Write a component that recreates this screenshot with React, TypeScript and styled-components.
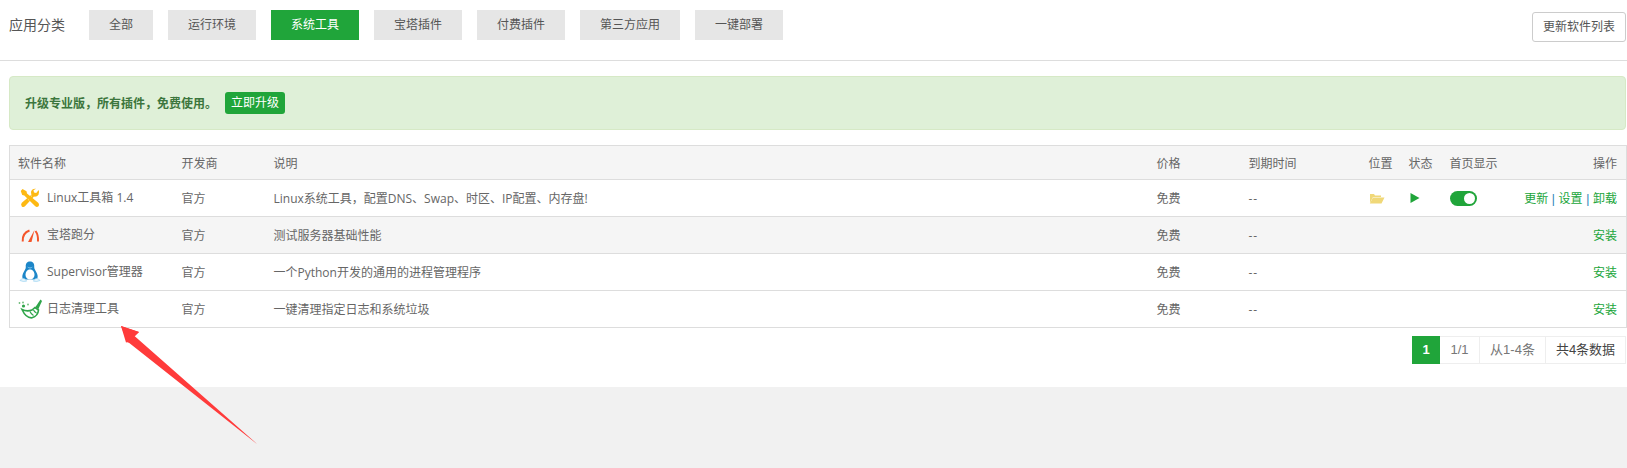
import React from "react";
import styled, { createGlobalStyle } from "styled-components";

const Global = createGlobalStyle`
  html, body { margin: 0; padding: 0; background: #f1f1f1; }
  body { font-family: "Open Sans", "Noto Sans CJK SC", sans-serif; font-size: 12px; color: #666; }
`;

const Page = styled.div`
  position: relative;
  width: 1627px;
  height: 468px;
  overflow: hidden;
  background: #f1f1f1;
`;
const Panel = styled.div`
  background: #fff;
  height: 387px;
  box-sizing: border-box;
`;
const TopBar = styled.div`
  height: 61px;
  box-sizing: border-box;
  border-bottom: 1px solid #ddd;
  display: flex;
  align-items: flex-start;
  padding: 10px 1px 0 9px;
`;
const Label = styled.span`
  font-size: 14px;
  line-height: 30px;
  color: #555;
  width: 80px;
`;
const Cats = styled.div`
  display: flex;
  gap: 15px;
  flex: 1;
`;
const Cat = styled.div<{ $on?: boolean }>`
  height: 30px;
  line-height: 30px;
  padding: 0 20px;
  font-size: 12px;
  background: ${(p) => (p.$on ? "#20a53a" : "#e6e6e6")};
  color: ${(p) => (p.$on ? "#fff" : "#555")};
`;
const Refresh = styled.div`
  margin-top: 2px;
  width: 94px;
  height: 30px;
  box-sizing: border-box;
  border: 1px solid #ccc;
  border-radius: 3px;
  text-align: center;
  line-height: 28px;
  color: #555;
`;
const Alert = styled.div`
  margin: 15px 1px 15px 9px;
  height: 54px;
  box-sizing: border-box;
  background: #dff0d8;
  border: 1px solid #d6e9c6;
  border-radius: 4px;
  display: flex;
  align-items: center;
  padding-left: 15px;
  color: #3c763d;
  font-weight: 700;
`;
const Upgrade = styled.span`
  margin-left: 8px;
  height: 22px;
  line-height: 22px;
  padding: 0 6px;
  background: #20a53a;
  color: #fff;
  border-radius: 3px;
  font-weight: 400;
  font-size: 12px;
`;
const Table = styled.table`
  margin-left: 9px;
  width: 1618px;
  box-sizing: border-box;
  table-layout: fixed;
  border-collapse: collapse;
  border: 1px solid #ddd;
`;
const HeadCell = styled.th<{ $right?: boolean }>`
  height: 33px;
  padding: ${(p) => (p.$right ? "0 9px 0 8px" : "0 8px")};
  font-weight: 400;
  text-align: ${(p) => (p.$right ? "right" : "left")};
  background: #f5f5f5;
  color: #666;
  border-bottom: 1px solid #ddd;
`;
const Row = styled.tr<{ $grey?: boolean }>`
  background: ${(p) => (p.$grey ? "#f5f5f5" : "#fff")};
`;
const Cell = styled.td<{ $right?: boolean }>`
  height: 36px;
  padding: ${(p) => (p.$right ? "0 9px 0 8px" : "0 8px")};
  text-align: ${(p) => (p.$right ? "right" : "left")};
  border-bottom: 1px solid #ddd;
  color: #666;
  white-space: nowrap;
`;
const NameWrap = styled.div`
  display: flex;
  align-items: center;
  gap: 7px;
  margin-left: 2px;
  svg { flex: none; }
`;
const NameText = styled.span`
  margin-bottom: 3px;
`;
const Dashes = styled.span`
  letter-spacing: 1px;
`;
const Action = styled.span`
  color: #20a53a;
`;
const Sep = styled.span`
  color: #2a7fb8;
  font-family: "Liberation Sans", sans-serif;
  margin: 0 0.5px;
`;
const Toggle = styled.div`
  width: 27px;
  height: 15px;
  border-radius: 8px;
  background: #20a53a;
  position: relative;
  &::after {
    content: "";
    position: absolute;
    right: 2px;
    top: 2px;
    width: 11px;
    height: 11px;
    border-radius: 50%;
    background: #fff;
  }
`;
const Pager = styled.div`
  display: flex;
  justify-content: flex-end;
  margin: 8px 1px 0 0;
  height: 28px;
  font-family: "Liberation Sans", "Noto Sans CJK SC", sans-serif;
  font-size: 13px;
`;
const PageItem = styled.div<{ $w: number; $on?: boolean; $dark?: boolean }>`
  width: ${(p) => p.$w}px;
  box-sizing: border-box;
  text-align: center;
  line-height: 26px;
  background: ${(p) => (p.$on ? "#20a53a" : "#fff")};
  color: ${(p) => (p.$on ? "#fff" : p.$dark ? "#444" : "#777")};
  font-weight: ${(p) => (p.$on ? 700 : 400)};
  border: 1px solid ${(p) => (p.$on ? "#20a53a" : "#eee")};
  border-left-width: ${(p) => (p.$on ? 1 : 0)}px;
`;
const ArrowSvg = styled.svg`
  position: absolute;
  left: 0;
  top: 0;
  pointer-events: none;
`;

const ToolsIcon = () => (
  <svg width="20" height="20" viewBox="0 0 20 20">
    <path d="M2.5 1 L6.5 3.3 L7 5.5 L18.5 15 Q19.8 17 18.3 18.5 Q16.7 19.6 15 18 L4.3 7.5 L2.2 7 L0.8 3 Z" fill="#fdb913" />
    <path d="M18.7 2 L16.2 5 L14 4.5 L13.5 2.3 L16 0.8 Q12.8 0.2 11.2 3 Q10.7 5 11.5 6.5 L1.8 14.8 Q0.4 16.7 1.8 18.4 Q3.6 19.6 5.2 18 L14 8.6 Q17 9 18.5 6.7 Q19.6 4.5 18.7 2 Z" fill="#fdb913" />
    <path d="M10.2 6.8 L12 8.6 M7.8 11.2 L9.3 12.6" stroke="#fff" strokeWidth="0.5" />
  </svg>
);
const GaugeIcon = () => (
  <svg width="20" height="20" viewBox="0 0 20 20" fill="none">
    <path d="M2.7 16.5 Q2.2 8 9.5 5.5" stroke="#f4552a" strokeWidth="2" />
    <path d="M15.5 6 Q18.5 10 18 16.5" stroke="#f4552a" strokeWidth="2" />
    <path d="M8 17 L14.5 5 L11.5 17 Z" fill="#f4552a" />
  </svg>
);
const TuxIcon = () => (
  <svg width="22" height="22" viewBox="0 0 22 22" style={{ margin: "0 -1px" }}>
    <path d="M11 0.5 C7.5 0.5 6.5 3 6.8 6 C7 8 5 10 4 12.5 C3 15 3 17 4.5 18.5 L17.5 18.5 C19 17 19 15 18 12.5 C17 10 15 8 15.2 6 C15.5 3 14.5 0.5 11 0.5 Z" fill="#1c86c8" />
    <path d="M11 8.5 C8 8.5 6.5 11 6.5 14 C6.5 16.5 8.5 18.5 11 18.5 C13.5 18.5 15.5 16.5 15.5 14 C15.5 11 14 8.5 11 8.5 Z" fill="#fff" />
    <path d="M8 5.5 Q11 7.5 14 5.5 Q11 9.5 8 5.5 Z" fill="#8ccdf0" />
    <path d="M1 19.5 Q2.5 17 5 17.5 Q7.5 18.5 7.5 20.2 Q4 21 1 19.5 Z M21 19.5 Q19.5 17 17 17.5 Q14.5 18.5 14.5 20.2 Q18 21 21 19.5 Z" fill="#e6f4fb" stroke="#8ccdf0" strokeWidth="0.6" />
  </svg>
);
const BroomIcon = () => (
  <svg width="24" height="20" viewBox="0 0 24 20" style={{ margin: "0 -2px" }}>
    <circle cx="1.5" cy="4" r="0.9" fill="#6dbb78" />
    <circle cx="5" cy="3.5" r="0.9" fill="#6dbb78" />
    <circle cx="5.5" cy="7" r="1.6" fill="#2fa54a" />
    <circle cx="10" cy="5.5" r="0.9" fill="#6dbb78" />
    <path d="M22.5 0.5 L24 2 L20.3 10.2 L17.3 8.3 Z" fill="#2fa54a" />
    <path d="M4 10.5 Q9 13 14 11 L17 8.5 L20.5 11 Q20 17 14 18.8 Q8 19.3 4 10.5 Z" fill="#fff" stroke="#2fa54a" strokeWidth="1.6" />
    <path d="M12 12.5 Q13 15 15.5 16.5 M15.5 11 Q16.5 13 18.5 14" fill="none" stroke="#2fa54a" strokeWidth="1.2" />
  </svg>
);

const rows = [
  { name: "Linux工具箱 1.4", icon: <ToolsIcon />, desc: "Linux系统工具，配置DNS、Swap、时区、IP配置、内存盘!", installed: true },
  { name: "宝塔跑分", icon: <GaugeIcon />, desc: "测试服务器基础性能", grey: true },
  { name: "Supervisor管理器", icon: <TuxIcon />, desc: "一个Python开发的通用的进程管理程序" },
  { name: "日志清理工具", icon: <BroomIcon />, desc: "一键清理指定日志和系统垃圾" },
];

export default function App() {
  return (
    <Page>
      <Global />
      <Panel>
        <TopBar>
          <Label>应用分类</Label>
          <Cats>
            <Cat>全部</Cat>
            <Cat>运行环境</Cat>
            <Cat $on>系统工具</Cat>
            <Cat>宝塔插件</Cat>
            <Cat>付费插件</Cat>
            <Cat>第三方应用</Cat>
            <Cat>一键部署</Cat>
          </Cats>
          <Refresh>更新软件列表</Refresh>
        </TopBar>
        <Alert>
          升级专业版，所有插件，免费使用。
          <Upgrade>立即升级</Upgrade>
        </Alert>
        <Table>
          <colgroup>
            <col width="164" />
            <col width="92" />
            <col width="883" />
            <col width="92" />
            <col width="120" />
            <col width="40" />
            <col width="41" />
            <col width="64" />
            <col />
          </colgroup>
          <thead>
            <tr>
              <HeadCell>软件名称</HeadCell>
              <HeadCell>开发商</HeadCell>
              <HeadCell>说明</HeadCell>
              <HeadCell>价格</HeadCell>
              <HeadCell>到期时间</HeadCell>
              <HeadCell>位置</HeadCell>
              <HeadCell>状态</HeadCell>
              <HeadCell>首页显示</HeadCell>
              <HeadCell $right>操作</HeadCell>
            </tr>
          </thead>
          <tbody>
            {rows.map((r) => (
              <Row key={r.name} $grey={r.grey}>
                <Cell>
                  <NameWrap>
                    {r.icon}
                    <NameText>{r.name}</NameText>
                  </NameWrap>
                </Cell>
                <Cell>官方</Cell>
                <Cell>{r.desc}</Cell>
                <Cell>免费</Cell>
                <Cell><Dashes>--</Dashes></Cell>
                <Cell>
                  {r.installed && (
                    <svg width="16" height="12" viewBox="0 0 16 12" style={{ display: "block" }}>
                      <path d="M1 11 L1 2 L5 2 L6 3.5 L12 3.5 L12 5 L4 5 Z" fill="#f0d878" />
                      <path d="M4 5.5 L15.5 5.5 L12.5 11.5 L0.8 11.5 Z" fill="#f0d878" />
                    </svg>
                  )}
                </Cell>
                <Cell>
                  {r.installed && (
                    <svg width="10" height="12" viewBox="0 0 10 12" style={{ display: "block", marginLeft: 1 }}>
                      <path d="M0.5 1 L9.5 6 L0.5 11 Z" fill="#20a53a" />
                    </svg>
                  )}
                </Cell>
                <Cell>{r.installed && <Toggle />}</Cell>
                <Cell $right>
                  {r.installed ? (
                    <>
                      <Action>更新</Action> <Sep>|</Sep> <Action>设置</Action> <Sep>|</Sep> <Action>卸载</Action>
                    </>
                  ) : (
                    <Action>安装</Action>
                  )}
                </Cell>
              </Row>
            ))}
          </tbody>
        </Table>
        <Pager>
          <PageItem $w={28} $on>1</PageItem>
          <PageItem $w={40}>1/1</PageItem>
          <PageItem $w={66}>从1-4条</PageItem>
          <PageItem $w={80} $dark>共4条数据</PageItem>
        </Pager>
      </Panel>
      <ArrowSvg width="1627" height="468" viewBox="0 0 1627 468">
        <path d="M121 326 L139 332 L134.5 336 L257 444 L128 342 L126 342.5 Z" fill="#ff3b3b" />
        <path d="M121 326 L139 332 L128 343 Z" fill="#ff3b3b" />
      </ArrowSvg>
    </Page>
  );
}
